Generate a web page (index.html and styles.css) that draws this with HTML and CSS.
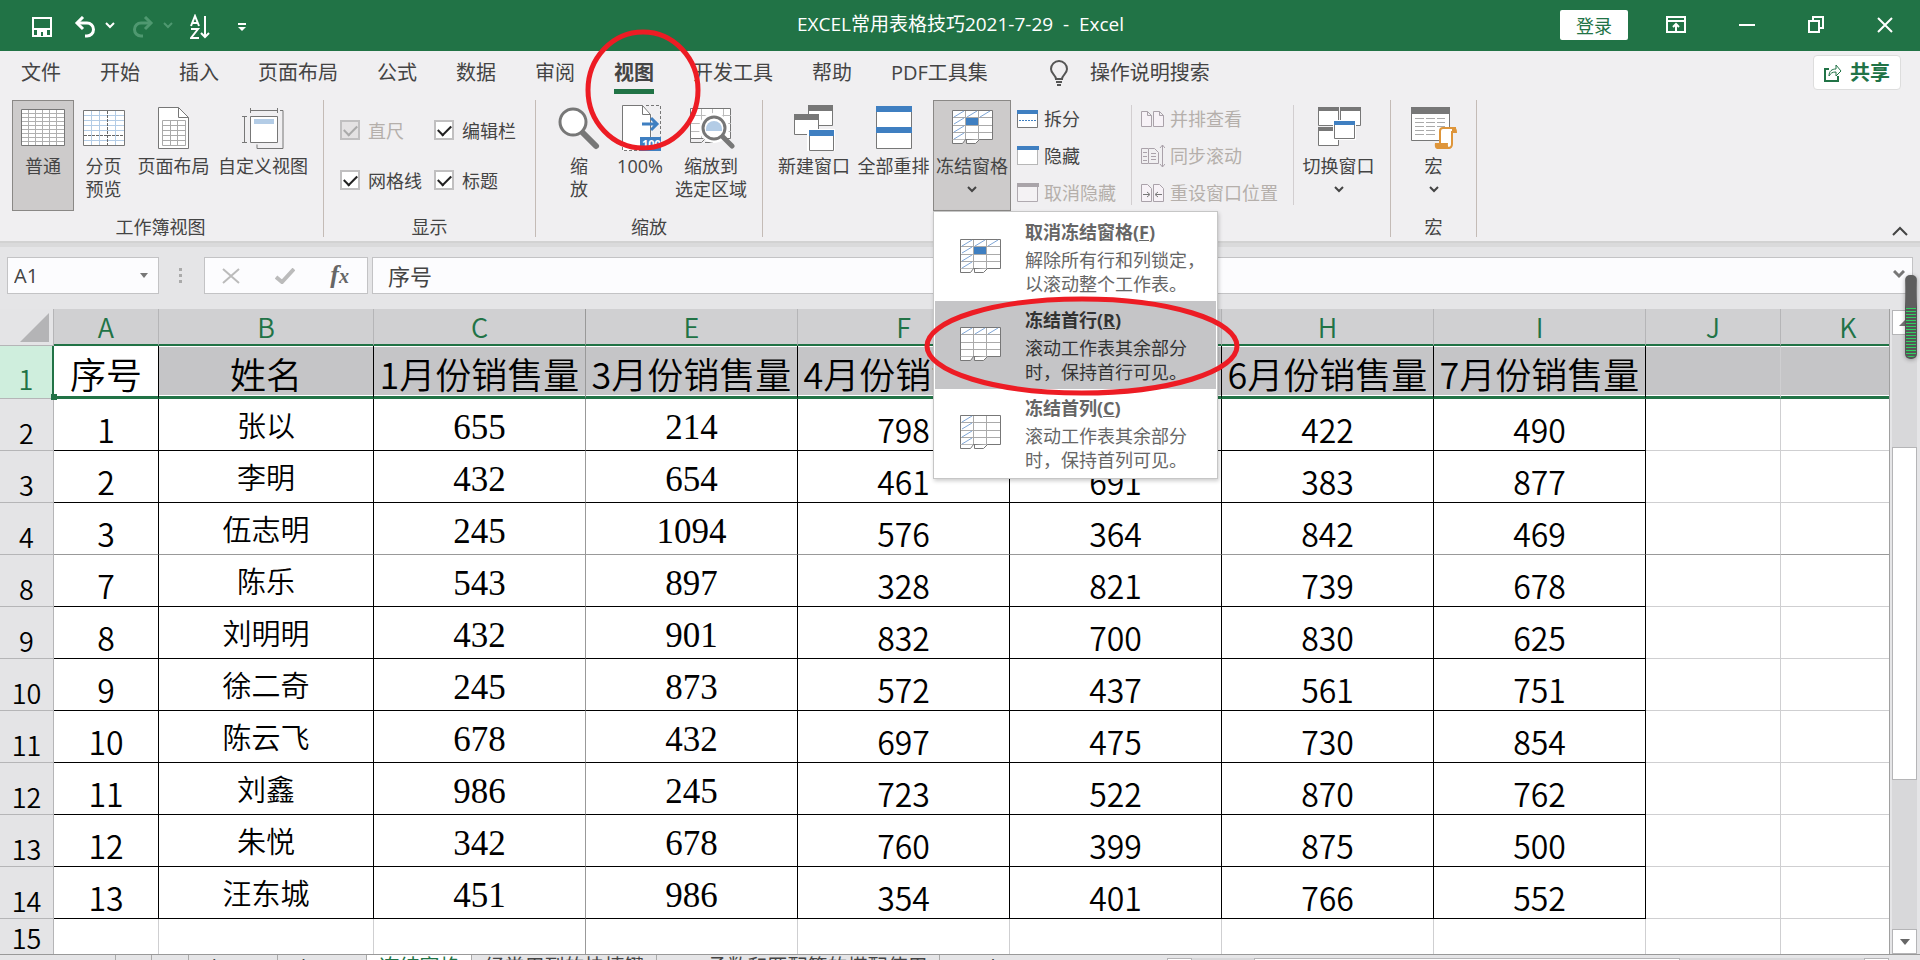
FILE: index.html
```
<!DOCTYPE html>
<html lang="zh-CN">
<head>
    <meta charset="UTF-8">
    <title>EXCEL常用表格技巧2021-7-29 - Excel</title>
    <link rel="stylesheet" href="styles.css">
</head>
<body>
    <!-- Title bar -->
    <header class="titlebar">
        <div class="quick">
            <button aria-label="保存"><svg width="20" height="20" fill="none" stroke="#fff" stroke-width="2"><path d="M1 1h18v18H1zM1 12h18"/><path d="M6 19v-5h8v5" fill="#fff"/><path d="M10 15v4" stroke="#217346"/></svg></button>
            <button aria-label="撤消"><svg width="42" height="22" fill="none" stroke="#fff"><path d="M3 7h10a6 6 0 0 1 0 13h-2" stroke-width="3"/><path d="M9 1L3 7l6 6" stroke-width="3"/><path d="M32 7l4 4 4-4" stroke-width="2"/></svg></button>
            <button aria-label="恢复" disabled><svg width="42" height="22" fill="none" stroke="#4f9870"><path d="M19 7H9a6 6 0 0 0 0 13h2" stroke-width="3"/><path d="M13 1l6 6-6 6" stroke-width="3"/><path d="M32 7l4 4 4-4" stroke-width="2"/></svg></button>
            <button aria-label="升序"><svg width="20" height="26" fill="none" stroke="#fff" stroke-width="2"><path d="M1 12L5 2l4 10M2 9h6M1 15h7L1 24h8M15 2v21M11 19l4 4 4-4"/></svg></button>
            <button aria-label="自定义"><svg width="8" height="8"><path d="M0 0h8v2H0zM0 4h8L4 8z" fill="#fff"/></svg></button>
        </div>
        <div class="doc-title">EXCEL常用表格技巧2021-7-29&nbsp; -&nbsp; Excel</div>
        <div class="window-buttons">
            <button class="login">登录</button>
            <button aria-label="功能区显示选项"><svg width="20" height="18" fill="none" stroke="#fff" stroke-width="2"><path d="M1 1h18v15H1zM1 5h18M10 15V8M7 11l3-3 3 3"/></svg></button>
            <button aria-label="最小化"><svg width="16" height="18"><path d="M0 9h16" stroke="#fff" stroke-width="2"/></svg></button>
            <button aria-label="还原"><svg width="16" height="18" fill="none" stroke="#fff" stroke-width="2"><path d="M1 5h10v11H1zM5 5V1h10v11h-4"/></svg></button>
            <button aria-label="关闭"><svg width="16" height="18"><path d="M1 2l14 14M15 2L1 16" stroke="#fff" stroke-width="2"/></svg></button>
        </div>
    </header>

    <!-- Ribbon -->
    <section class="ribbon">
        <nav class="tabs">
            <a href="#">文件</a>
            <a href="#">开始</a>
            <a href="#">插入</a>
            <a href="#">页面布局</a>
            <a href="#">公式</a>
            <a href="#">数据</a>
            <a href="#">审阅</a>
            <a href="#" class="active">视图</a>
            <a href="#">开发工具</a>
            <a href="#">帮助</a>
            <a href="#">PDF工具集</a>
            <a href="#" class="tell-me"><svg width="18" height="26" fill="none" stroke="#555" stroke-width="2"><path d="M6 19c0-4-5-5-5-10a8 8 0 0 1 16 0c0 5-5 6-5 10zM6 22h6M7 25h4"/></svg>操作说明搜索</a>
            <button class="share"><svg width="18" height="19" fill="none" stroke="#217346" stroke-width="2"><path d="M5 6H1v12h13v-5"/><path d="M5 13c0-5 3-7 7-7V2l5 6-5 5V9c-4 0-5 1-7 4z" stroke-width="1"/></svg>共享</button>
        </nav>

        <div class="groups">
            <div class="group">
                <div class="tools views">
                    <button class="tool pressed">
                        <svg width="48" height="46"><path d="M2.500 4.500h43v36h-43z" fill="#fff" stroke="#777"/><path d="M9.500 5v35M16.500 5v35M23.500 5v35M30.500 5v35M37.500 5v35M3 8.500h42M3 12.500h42M3 16.500h42M3 20.500h42M3 24.500h42M3 28.500h42M3 32.500h42M3 36.500h42" stroke="#b0b0b0"/></svg>
                        <span>普通</span>
                    </button>
                    <button class="tool">
                        <svg width="48" height="46"><path d="M3.500 5.500h41v35h-41z" fill="#fff" stroke="#777"/><path d="M11.500 6v34M19.500 6v34M35.500 6v34M4 10.500h40M4 15.500h40M4 20.500h40M4 25.500h40M4 35.500h40" stroke="#b3cce6"/><path d="M27.500 6v34M4 30.500h40" stroke="#666" stroke-dasharray="3 1"/></svg>
                        <span>分页<br>预览</span>
                    </button>
                    <button class="tool">
                        <svg width="48" height="46"><path d="M8.500 2.500h20l10 10v31h-30z" fill="#fff" stroke="#777"/><path d="M28.500 2.500v10h10" fill="none" stroke="#777"/><path d="M12.500 15.500h23v25h-23zM20.500 16v25M27.500 16v25M13 20.500h22M13 25.500h22M13 30.500h22M13 35.500h22" fill="none" stroke="#aaa"/></svg>
                        <span>页面布局</span>
                    </button>
                    <button class="tool">
                        <svg width="48" height="46" fill="none" stroke="#777"><path d="M11.500 11.500h27v26h-27z" fill="#fff"/><path d="M15 14h20v5H15z" fill="#b3cce6" stroke="none"/><path d="M11.500 3v5M38.500 3v5M11 5.500h27M3 11.500h5M3 37.500h5M5.500 12v25M41 5.500h3v38h-26v-4"/></svg>
                        <span>自定义视图</span>
                    </button>
                </div>
                <div class="group-name">工作簿视图</div>
            </div>

            <div class="group">
                <div class="tools checks">
                    <label class="disabled"><input type="checkbox" checked disabled>直尺</label>
                    <label><input type="checkbox" checked>编辑栏</label>
                    <label><input type="checkbox" checked>网格线</label>
                    <label><input type="checkbox" checked>标题</label>
                </div>
                <div class="group-name">显示</div>
            </div>

            <div class="group">
                <div class="tools zooms">
                    <button class="tool">
                        <svg width="48" height="46"><circle cx="18" cy="17" r="13" fill="#fff" stroke="#777" stroke-width="3"/><path d="M28 28l13 13" stroke="#777" stroke-width="6" stroke-linecap="round"/></svg>
                        <span>缩<br>放</span>
                    </button>
                    <button class="tool">
                        <svg width="48" height="46"><path d="M6.500.500h21l8 9v36h-29z" fill="#fff"/><path d="M6.500 40V.500h20l8 9V32M26.500.500v9h8" fill="none" stroke="#777"/><path d="M30 .500h14.500v31M6.500 42v3.500h18" fill="none" stroke="#777" stroke-dasharray="3 2"/><path d="M26 19h15M35 13l6 6-6 6" fill="none" stroke="#3f7fc1" stroke-width="3"/><path d="M24 32h21v14H24z" fill="#3f7fc1"/><text x="26" y="43" class="badge-100">100</text></svg>
                        <span>100%</span>
                    </button>
                    <button class="tool">
                        <svg width="48" height="46"><path d="M3.500 3.500h40v30h-40z" fill="#fff" stroke="#777"/><path d="M14.500 4v29M25.500 4v29M36.500 4v29M4 10.500h40M4 18.500h40M4 26.500h40" stroke="#bbb"/><path d="M3.500 33.500v4h11l4-4M18 37.500h8" fill="none" stroke="#777"/><circle cx="27" cy="23" r="15" fill="#fff"/><circle cx="27" cy="23" r="11" fill="#fff" stroke="#777" stroke-width="3"/><path d="M19 24a8 8 0 1 1 16 0v2H19z" fill="#b3cce6"/><path d="M36 32l9 9" stroke="#777" stroke-width="5" stroke-linecap="round"/></svg>
                        <span>缩放到<br>选定区域</span>
                    </button>
                </div>
                <div class="group-name">缩放</div>
            </div>

            <div class="group">
                <div class="tools windows">
                    <button class="tool">
                        <svg width="48" height="46" fill="#fff" stroke="#777"><path d="M18.500.500h24v20h-24z"/><path d="M18 0h25v6H18z" fill="#777" stroke="none"/><path d="M4.500 9.500h24v20h-24z"/><path d="M4 9h25v6H4z" fill="#777" stroke="none"/><path d="M17 24h28v22H17z" stroke="none"/><path d="M19.500 25.500h24v20h-24z"/><path d="M19 25h25v6H19z" fill="#3f7fc1" stroke="none"/></svg>
                        <span>新建窗口</span>
                    </button>
                    <button class="tool">
                        <svg width="48" height="46" fill="#fff" stroke="#777"><path d="M6.500 1.500h35v42h-35z"/><path d="M6 1h36v6H6zM6 22h36v6H6z" fill="#3f7fc1" stroke="none"/></svg>
                        <span>全部重排</span>
                    </button>
                    <div class="menu-anchor">
                        <button class="tool pressed">
                            <svg width="48" height="46"><use href="#sheet-both" x="4" y="5"/></svg>
                            <span>冻结窗格</span>
                            <svg class="chevron" width="10" height="7"><path d="M1 1l4 4 4-4"/></svg>
                        </button>
                        <!-- Freeze panes menu -->
                        <div class="menu">
                            <button class="menu-item">
                                <svg width="42" height="36"><use href="#sheet-both"/></svg>
                                <span><b>取消冻结窗格(<u>F</u>)</b>解除所有行和列锁定，<br>以滚动整个工作表。</span>
                            </button>
                            <button class="menu-item hover">
                                <svg width="42" height="36"><use href="#sheet-row"/></svg>
                                <span><b>冻结首行(<u>R</u>)</b>滚动工作表其余部分<br>时，保持首行可见。</span>
                            </button>
                            <button class="menu-item">
                                <svg width="42" height="36"><use href="#sheet-col"/></svg>
                                <span><b>冻结首列(<u>C</u>)</b>滚动工作表其余部分<br>时，保持首列可见。</span>
                            </button>
                        </div>
                    </div>
                    <div class="small-tools">
                        <button><svg width="22" height="20" fill="#fff" stroke="#777"><path d="M.500 1.500h20v17H.500z"/><path d="M0 1h21v4H0z" fill="#3f7fc1" stroke="none"/><path d="M2 11.500h17" stroke="#3f7fc1" stroke-dasharray="2 1"/></svg>拆分</button>
                        <button><svg width="22" height="20" fill="#fff" stroke="#777"><path d="M.500 1.500h20v17H.500z" stroke-dasharray="1 1"/><path d="M0 0h22v4H0z" fill="#3f7fc1" stroke="none"/></svg>隐藏</button>
                        <button disabled><svg width="22" height="20" fill="#f4f2f4" stroke="#b0aab0"><path d="M.500 1.500h20v17H.500z"/><path d="M0 0h22v4H0z" fill="#a9a4a9" stroke="none"/></svg>取消隐藏</button>
                    </div>
                    <div class="small-tools second">
                        <button disabled><svg width="24" height="20" fill="#f7f2f7" stroke="#aaa2aa"><path d="M.500 2.500h6l4 4v11H.500zM6.500 2.500v4h4M12.500 2.500h6l4 4v11h-10zM18.500 2.500v4h4"/></svg>并排查看</button>
                        <button disabled><svg width="24" height="24" fill="none" stroke="#aaa2aa"><path d="M7 4.500H.500v15H7M2 8.500h4M2 12.500h4M2 16.500h4M7.500 4.500h6l4 4v11h-10zM10 9.500h5M10 12.500h5M10 15.500h5M21.500 1v22M19 4l2.500-3L24 4M19 20l2.500 3 2.500-3"/></svg>同步滚动</button>
                        <button disabled><svg width="24" height="20" fill="#f7f2f7" stroke="#aaa2aa"><path d="M.500 1.500h6l4 4v13H.500zM12.500 1.500h6l4 4v13h-10z"/><path d="M2 11.500h6M6 9l3 2.500L6 14M21 11.500h-6M17 9l-3 2.500 3 2.500" fill="none" stroke="#777"/></svg>重设窗口位置</button>
                    </div>
                    <button class="tool">
                        <svg width="48" height="46" fill="#fff" stroke="#777"><path d="M3.500 2.500h20v18h-20zM25.500 2.500h20v18h-20zM3.500 22.500h20v18h-20z"/><path d="M3 2h21v4H3zM25 2h21v4H25zM3 22h21v4H3z" fill="#777" stroke="none"/><path d="M18 15h23v20H18z" stroke="none"/><path d="M19.500 16.500h20v17h-20z"/><path d="M19 16h21v4H19z" fill="#3f7fc1" stroke="none"/></svg>
                        <span>切换窗口</span>
                        <svg class="chevron" width="10" height="7"><path d="M1 1l4 4 4-4"/></svg>
                    </button>
                </div>
            </div>

            <div class="group">
                <div class="tools macros">
                    <button class="tool">
                        <svg width="48" height="46"><path d="M1.500 2.500h38v33h-38z" fill="#fff" stroke="#777"/><path d="M1 2h39v7H1z" fill="#777"/><path d="M5 13.500h30M5 17.500h30M5 21.500h30M5 25.500h22M5 29.500h22" stroke="#aaa" stroke-dasharray="9 2"/><path d="M30 38V26q0-3 3-3h12v4h-3v12q0 4-4 4H30z" fill="#fff" stroke="#de953a" stroke-width="2"/><path d="M42 23h3q2 0 2 5h-5zM25 38h13q-1 5 3 6H27q-3-1-2-6z" fill="#de953a"/></svg>
                        <span>宏</span>
                        <svg class="chevron" width="10" height="7"><path d="M1 1l4 4 4-4"/></svg>
                    </button>
                </div>
                <div class="group-name">宏</div>
            </div>
            <button class="collapse" aria-label="折叠功能区"><svg width="16" height="10"><path d="M1 9l7-7 7 7" fill="none" stroke="#444" stroke-width="2"/></svg></button>
        </div>
    </section>

    <!-- Formula bar -->
    <section class="formula-bar">
        <div class="name-box">
            <input type="text" value="A1" aria-label="名称框">
            <svg width="8" height="5"><path d="M0 0h8L4 5z" fill="#777"/></svg>
        </div>
        <svg class="dots" width="3" height="16"><path d="M0 0h3v3H0zM0 6h3v3H0zM0 12h3v3H0z" fill="#aaa"/></svg>
        <div class="fx-box">
            <button aria-label="取消"><svg width="18" height="16"><path d="M1 1l16 14M17 1L1 15" stroke="#bbb" stroke-width="2"/></svg></button>
            <button aria-label="输入"><svg width="20" height="16"><path d="M1 9l6 5L19 1" fill="none" stroke="#bbb" stroke-width="4"/></svg></button>
            <button class="fx">f<small>x</small></button>
        </div>
        <div class="formula">
            <input type="text" value="序号" aria-label="编辑栏">
            <svg width="12" height="9"><path d="M1 1l5 5 5-5" fill="none" stroke="#777" stroke-width="3"/></svg>
        </div>
    </section>

    <!-- Worksheet -->
    <main class="sheet">
        <div class="grid">
            <table>
                <colgroup>
                    <col class="c-head"><col class="c-a"><col class="c-b"><col class="c-num"><col class="c-num"><col class="c-num"><col class="c-num"><col class="c-num"><col class="c-num"><col class="c-j"><col>
                </colgroup>
                <thead>
                    <tr><th class="corner"><svg width="29" height="29"><path d="M29 0v29H0z" fill="#b4b4b6"/></svg></th><th>A</th><th>B</th><th>C</th><th>E</th><th>F</th><th>G</th><th>H</th><th>I</th><th>J</th><th>K</th></tr>
                </thead>
                <tbody>
                    <tr class="selected"><th>1</th><td>序号</td><td>姓名</td><td>1月份销售量</td><td>3月份销售量</td><td>4月份销售量</td><td>5月份销售量</td><td>6月份销售量</td><td>7月份销售量</td><td></td><td></td></tr>
                    <tr><th>2</th><td>1</td><td>张以</td><td>655</td><td>214</td><td>798</td><td></td><td>422</td><td>490</td><td></td><td></td></tr>
                    <tr><th>3</th><td>2</td><td>李明</td><td>432</td><td>654</td><td>461</td><td>691</td><td>383</td><td>877</td><td></td><td></td></tr>
                    <tr class="frozen"><th>4</th><td>3</td><td>伍志明</td><td>245</td><td>1094</td><td>576</td><td>364</td><td>842</td><td>469</td><td></td><td></td></tr>
                    <tr><th>8</th><td>7</td><td>陈乐</td><td>543</td><td>897</td><td>328</td><td>821</td><td>739</td><td>678</td><td></td><td></td></tr>
                    <tr><th>9</th><td>8</td><td>刘明明</td><td>432</td><td>901</td><td>832</td><td>700</td><td>830</td><td>625</td><td></td><td></td></tr>
                    <tr><th>10</th><td>9</td><td>徐二奇</td><td>245</td><td>873</td><td>572</td><td>437</td><td>561</td><td>751</td><td></td><td></td></tr>
                    <tr><th>11</th><td>10</td><td>陈云飞</td><td>678</td><td>432</td><td>697</td><td>475</td><td>730</td><td>854</td><td></td><td></td></tr>
                    <tr><th>12</th><td>11</td><td>刘鑫</td><td>986</td><td>245</td><td>723</td><td>522</td><td>870</td><td>762</td><td></td><td></td></tr>
                    <tr><th>13</th><td>12</td><td>朱悦</td><td>342</td><td>678</td><td>760</td><td>399</td><td>875</td><td>500</td><td></td><td></td></tr>
                    <tr><th>14</th><td>13</td><td>汪东城</td><td>451</td><td>986</td><td>354</td><td>401</td><td>766</td><td>552</td><td></td><td></td></tr>
                    <tr class="empty"><th>15</th><td></td><td></td><td></td><td></td><td></td><td></td><td></td><td></td><td></td><td></td></tr>
                </tbody>
            </table>
        </div>
        <div class="scroll">
            <button aria-label="向上滚动"><svg width="12" height="6"><path d="M0 6h12L6 0z" fill="#777"/></svg></button>
            <div class="track"><div class="thumb"></div></div>
            <button aria-label="向下滚动"><svg width="10" height="6"><path d="M0 0h10L5 6z" fill="#666"/></svg></button>
        </div>
        <div class="meter"></div>
    </main>

    <!-- Sheet tabs -->
    <footer class="sheet-tabs">
        <a href="#">2</a>
        <a href="#">3</a>
        <a href="#">Sheet1</a>
        <a href="#">Sheet2</a>
        <a href="#" class="active">冻结窗格</a>
        <a href="#">经常用到的快捷键</a>
        <a href="#" class="wide">函数和匹配等的搭配使用</a>
        <a href="#" class="wide">k</a>
        <div class="h-scroll"><i></i><b></b><i></i></div>
    </footer>

    <!-- Hand-drawn marks -->
    <svg class="mark mark-tab" viewBox="0 0 116 122"><ellipse cx="58" cy="61" rx="55" ry="58"/></svg>
    <svg class="mark mark-row" viewBox="0 0 316 100"><ellipse cx="158" cy="50" rx="155" ry="47"/></svg>

    <svg class="defs" width="0" height="0">
        <symbol id="sheet-base" width="42" height="36"><path d="M.500.500h40v29H.500z" fill="#fff" stroke="#777"/><path d="M13.500 1v28M26.500 1v28M1 7.500h39M1 15.500h39M1 22.500h39" stroke="#aaa"/><path d="M.500 29.500v4h10l3-4M14.500 30v3.500h9l4-4" fill="#fff" stroke="#777"/></symbol>
        <symbol id="sheet-row" width="42" height="36"><use href="#sheet-base"/><path d="M2 7l10-6M15 7l10-6M28 7l10-6" stroke="#7fa6d6"/></symbol>
        <symbol id="sheet-col" width="42" height="36"><use href="#sheet-base"/><path d="M2 7l10-6M2 14l10-6M2 22l10-6M2 29l10-6" stroke="#7fa6d6"/></symbol>
        <symbol id="sheet-both" width="42" height="36"><use href="#sheet-col"/><path d="M15 7l10-6M28 7l10-6" stroke="#7fa6d6"/><path d="M14 8h12v7H14z" fill="#3f7fc1"/></symbol>
    </svg>
</body>
</html>
```
FILE: styles.css
```
* {
    box-sizing: border-box;
}

body {
    margin: 0;
    height: 100vh;
    display: flex;
    flex-direction: column;
    overflow: hidden;
    background-color: #e5e5e7;
    color: #444;
    font-family: "Open Sans", "Noto Sans CJK SC", sans-serif;
    font-size: 18px;
}

button, input {
    font: inherit;
    color: inherit;
    background: none;
    border: none;
    padding: 0;
}

a {
    color: inherit;
    text-decoration: none;
}

svg {
    display: block;
    flex: none;
}

/* Title bar */
.titlebar {
    height: 51px;
    flex: none;
    display: grid;
    grid-template-columns: 1fr auto 1fr;
    align-items: center;
    background-color: #217346;
    color: white;
    padding: 0 27px 2px 32px;
}

.quick {
    display: flex;
    align-items: center;
    gap: 22px;
    padding-top: 4px;
}

.quick button:nth-child(2),
.quick button:nth-child(3) {
    margin-right: -6px;
}

.quick button:nth-child(5) {
    margin-left: 6px;
}

.doc-title {
    font-size: 19px;
    line-height: 24px;
    padding: 0 4px 2px 0;
    white-space: pre;
}

.window-buttons {
    display: flex;
    justify-content: flex-end;
    align-items: center;
    gap: 53px;
}

.login {
    width: 68px;
    height: 30px;
    margin-right: -15px;
    border-radius: 2px;
    background-color: white;
    color: #217346;
}

/* Ribbon */
.ribbon {
    flex: none;
    background-color: #f0eff1;
    border-bottom: 2px solid #d2d2d2;
}

.tabs {
    height: 49px;
    display: flex;
    align-items: flex-start;
    gap: 39px;
    padding: 6px 19px 0 21px;
    font-size: 20px;
    line-height: 32px;
}

.tabs .active {
    font-weight: bold;
    border-bottom: 5px solid #217346;
}

.tell-me {
    display: flex;
    align-items: center;
    gap: 22px;
    margin-left: 23px;
}

.share {
    display: flex;
    align-items: center;
    justify-content: center;
    gap: 8px;
    width: 88px;
    height: 35px;
    margin: -2px 0 0 auto;
    border: 1px solid #ddd;
    border-radius: 4px;
    background-color: white;
    color: #217346;
    font-weight: bold;
}

.groups {
    display: flex;
    height: 141px;
}

.group {
    display: flex;
    flex-direction: column;
    border-right: 1px solid #c4bbb6;
    margin-bottom: 4px;
}

.group-name {
    line-height: 20px;
    padding-top: 6px;
    text-align: center;
}

.tools {
    display: grid;
    flex: none;
    height: 111px;
}

.views {
    grid-template-columns: 62px 59px 81px 98px;
    padding: 0 11px 0 12px;
}

.group:first-child .group-name {
    padding-right: 2px;
}

.zooms {
    grid-template-columns: 52px 70px 72px;
    padding: 0 15px 0 17px;
}

.windows {
    grid-template-columns: 80px 79px 78px 120px 163px 89px;
    padding: 0 7px 0 11px;
}

.macros {
    grid-template-columns: 85px;
}

.tool {
    display: flex;
    flex-direction: column;
    align-items: center;
    height: 111px;
    border: 1px solid transparent;
    padding-top: 4px;
    line-height: 23px;
    white-space: nowrap;
}

.tool span {
    margin-top: 4px;
}

.pressed {
    width: 100%;
    background-color: #cdcbcb;
    border-color: #8a8886;
}

.chevron {
    margin-top: 8px;
    fill: none;
    stroke: #444;
    stroke-width: 2px;
}

.badge-100 {
    font-size: 11px;
    font-weight: bold;
    fill: white;
}

.checks {
    grid-template-columns: 94px 94px;
    grid-template-rows: 50px 50px;
    padding: 5px 7px 0 16px;
}

.checks label {
    display: flex;
    align-items: center;
    gap: 8px;
    white-space: nowrap;
}

.checks .disabled {
    color: #b5afab;
}

.checks input {
    appearance: none;
    width: 20px;
    height: 20px;
    margin: 0;
    border: 2px solid #c0bfc0;
    background-color: white;
    display: grid;
    place-items: center;
}

.checks input::after {
    content: "";
    width: 11px;
    height: 6px;
    margin-bottom: 3px;
    border: solid #222;
    border-width: 0 0 2px 2px;
    transform: rotate(-45deg);
}

.checks input:disabled {
    background-color: #e4e2e3;
}

.checks input:disabled::after {
    border-color: #aaa;
}

.small-tools {
    display: flex;
    flex-direction: column;
    gap: 13px;
    padding: 7px 0 0 6px;
}

.small-tools button {
    display: flex;
    align-items: center;
    gap: 5px;
    line-height: 24px;
    white-space: nowrap;
}

.small-tools button:disabled {
    color: #b5afab;
}

.second {
    border: solid #d2ced0;
    border-width: 0 1px;
    margin: 5px 0 8px;
    padding: 2px 0 0 9px;
}

.collapse {
    margin: auto 12px 5px auto;
}

/* Freeze panes menu */
.menu-anchor {
    position: relative;
}

.menu {
    position: absolute;
    z-index: 2;
    top: 111px;
    left: 0;
    width: 285px;
    padding: 1px;
    background-color: white;
    border: 1px solid #c6c6c6;
    box-shadow: 1px 2px 4px rgba(0, 0, 0, 0.2);
}

.menu-item {
    display: flex;
    align-items: flex-start;
    gap: 23px;
    width: 100%;
    height: 88px;
    padding: 7px 0 0 25px;
    text-align: left;
    line-height: 24px;
    color: #666;
    white-space: nowrap;
}

.menu-item svg {
    margin-top: 19px;
}

.menu-item b {
    display: block;
    margin-bottom: 4px;
    line-height: 24px;
}

.menu-item.hover {
    background-color: #c5c5c7;
    color: #333;
}

/* Formula bar */
.formula-bar {
    flex: none;
    height: 66px;
    display: flex;
    align-items: flex-start;
    padding: 10px 7px 0;
    border-top: 4px solid #dadadb;
    font-size: 20px;
}

.name-box, .fx-box, .formula {
    display: flex;
    align-items: center;
    height: 37px;
    border: 1px solid #c3c3c5;
    background-color: #fcfcfe;
}

.name-box {
    width: 152px;
    padding: 0 10px 0 6px;
}

.name-box input, .formula input {
    flex: 1;
    min-width: 0;
}

.dots {
    margin: 11px 22px 0 20px;
}

.fx-box {
    width: 164px;
    justify-content: space-between;
    padding: 0 18px 0 17px;
}

.fx {
    font-family: "Liberation Serif", serif;
    font-style: italic;
    font-weight: bold;
    font-size: 26px;
    line-height: 26px;
    color: #666;
}

.fx small {
    font-size: 20px;
}

.formula {
    flex: 1;
    margin-left: 4px;
    padding: 0 7px 2px 15px;
    font-size: 22px;
}

/* Worksheet */
.sheet {
    position: relative;
    flex: 1;
    min-height: 0;
    display: flex;
}

.grid {
    flex: 1;
    min-width: 0;
    overflow: hidden;
    border-right: 1px solid #a0a0a0;
}

/* the last column runs on under the scrollbar */
table {
    width: calc(100% + 27px);
    table-layout: fixed;
    border-spacing: 0;
    background-color: white;
    color: black;
    font-family: "Noto Sans CJK SC", sans-serif;
    font-weight: 350;
}

.c-head { width: 54px; }
.c-a { width: 105px; }
.c-b { width: 215px; }
.c-num { width: 212px; }
.c-j { width: 135px; }

th, td {
    height: 52px;
    padding: 0;
    border: solid black;
    border-width: 0 1px 1px 0;
    text-align: center;
    white-space: nowrap;
    line-height: 40px;
}

th {
    font-weight: 350;
    font-size: 27px;
    background-color: #e4e4e6;
    border-color: #b5b5b7;
}

thead th {
    height: 37px;
    line-height: 35px;
    color: #217346;
    background-color: #d0d0d2;
    border-bottom: 2px solid #217346;
}

thead .corner {
    padding-left: 20px;
    background-color: #e4e4e6;
    border-bottom: 1px solid #b5b5b7;
}

tbody th {
    vertical-align: bottom;
    line-height: 34px;
}

td {
    font-size: 32px;
    padding-bottom: 1px;
    vertical-align: bottom;
}

td:nth-child(3) {
    font-size: 29px;
    vertical-align: middle;
}

td:nth-child(4), td:nth-child(5) {
    font-family: "Liberation Serif", serif;
    font-size: 35px;
    padding-top: 7px;
    vertical-align: middle;
}

td:nth-child(n+10) {
    border-color: #cfcfd1;
}

td:nth-child(4), thead th:nth-child(4) {
    border-right-color: #999;
}

.frozen td {
    border-bottom-color: #999;
}

.selected th, .selected td {
    height: 53px;
    vertical-align: middle;
    border-bottom: 3px solid #217346;
}

.selected th {
    position: relative;
    padding-top: 14px;
    color: #217346;
    background-color: #cfeedd;
    border-bottom: 1px solid #b5b5b7;
    border-right: 2px solid #217346;
}

/* fill handle */
.selected th::after {
    content: "";
    position: absolute;
    right: -5px;
    bottom: -2px;
    width: 6px;
    height: 6px;
    background-color: #217346;
}

.selected td {
    padding-top: 4px;
    font-family: "Noto Sans CJK SC", sans-serif;
    font-size: 36px;
    background-color: #c5c5c7;
    box-shadow: inset 0 1px white, inset 0 -1px white;
}

.selected td:nth-child(2) {
    background-color: white;
}

.empty th, .empty td {
    height: 36px;
    border-bottom: none;
}

.empty td {
    border-color: #cfcfd1;
}

.empty td:nth-child(4) {
    border-color: #999;
}

/* Scrollbar */
.scroll {
    width: 30px;
    display: flex;
    flex-direction: column;
    padding: 1px 3px 0 2px;
}

.scroll button {
    height: 25px;
    display: grid;
    place-items: center;
    border: 1px solid #b5b5b7;
    background-color: white;
}

.track {
    flex: 1;
    background-color: #d8d8da;
    padding-top: 112px;
}

.thumb {
    height: 69%;
    border: 1px solid #b5b5b7;
    background-color: white;
}

/* Floating level meter */
.meter {
    position: absolute;
    right: 3px;
    top: -34px;
    width: 12px;
    height: 84px;
    border: 1px solid #555;
    border-top: 33px solid #5e5e5e;
    border-bottom: 2px solid #555;
    border-radius: 5px;
    background: repeating-linear-gradient(#2fd060 0 1px, #555 1px 3px);
    box-shadow: 0 1px 4px rgba(0, 0, 0, 0.3);
}

/* Sheet tabs */
.sheet-tabs {
    flex: none;
    height: 6px;
    display: flex;
    overflow: hidden;
    padding: 0 31px 0 115px;
    border-top: 1px solid #999;
    font-size: 20px;
    line-height: 24px;
}

.sheet-tabs a {
    flex: none;
    height: 24px;
    padding: 0 12px;
    border-left: 1px solid #aaa;
    white-space: nowrap;
}

.sheet-tabs .active {
    background-color: white;
    color: #217346;
}

.sheet-tabs .wide {
    padding-left: 50px;
}

.h-scroll {
    display: flex;
    width: 722px;
    height: 24px;
    margin: 3px 0 0 auto;
    background-color: #d8d8da;
}

.h-scroll i, .h-scroll b {
    width: 25px;
    border: 1px solid #b5b5b7;
    background-color: white;
}

.h-scroll b {
    width: 426px;
    margin: 0 auto 0 62px;
}

/* Red marks */
.mark {
    position: absolute;
    z-index: 3;
    fill: none;
    stroke: #ed1c24;
    stroke-width: 5px;
    pointer-events: none;
}

.mark-tab {
    left: 585px;
    top: 29px;
    width: 116px;
}

.mark-row {
    left: 924px;
    top: 296px;
    width: 316px;
}

.defs {
    position: absolute;
}
```
